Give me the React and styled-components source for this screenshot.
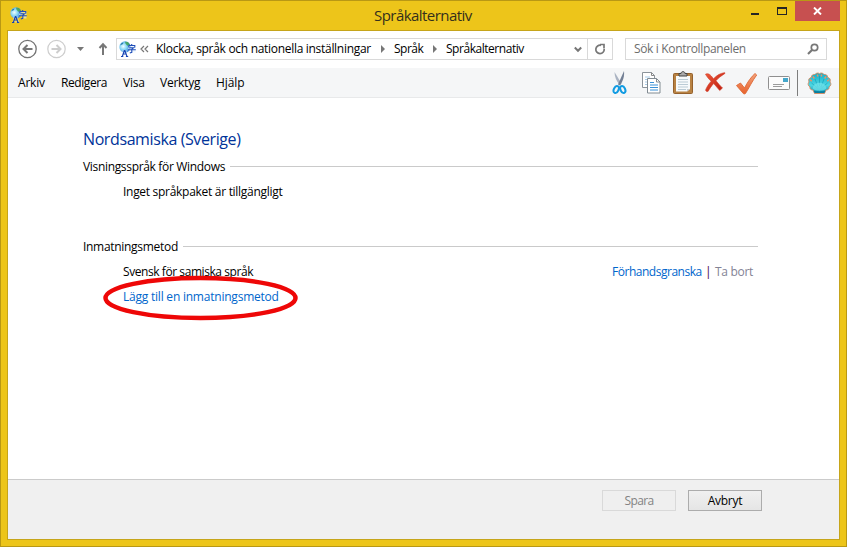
import React from "react";
import styled, { createGlobalStyle } from "styled-components";

const Global = createGlobalStyle`
  * { box-sizing: border-box; }
  body { margin: 0; overflow: hidden; }
  svg { display: block; flex: none; }
`;

const Frame = styled.div`
  width: 847px;
  height: 547px;
  padding: 0 6px 6px;
  border: 1px solid #b99814;
  background: #edc51a;
  display: flex;
  flex-direction: column;
  font: 12px/16px "Open Sans", "Noto Sans", sans-serif;
  color: #000;
`;

const Label = styled.span`
  display: block;
  flex: none;
  width: ${(p) => p.$w}px;
  letter-spacing: ${(p) => p.$ls || 0}px;
  white-space: pre;
  color: ${(p) => p.$color || "inherit"};
`;

const TitleBar = styled.header`
  flex: none;
  height: 29px;
  display: grid;
  grid-template-columns: 367px 1fr auto;
`;

const AppIcon = styled.div`
  padding: 6px 0 0 3px;
`;

const Title = styled.h1`
  margin: 0;
  padding-top: 3px;
  font-size: 15px;
  line-height: 22px;
  font-weight: 400;
  color: #342f1c;
`;

const Controls = styled.div`
  display: flex;
  align-items: flex-start;
`;

const CloseButton = styled.div`
  width: 45px;
  height: 20px;
  background: #c75050;
  display: flex;
  align-items: center;
  justify-content: center;
`;

const Client = styled.main`
  flex: 1;
  border: 1px solid #c6a51a;
  background: #fff;
  display: flex;
  flex-direction: column;
`;

const NavBar = styled.div`
  flex: none;
  height: 37px;
  padding: 7px 12px 0 10px;
  display: flex;
`;

const NavButtons = styled.div`
  width: 98px;
  height: 22px;
`;

const Field = styled.div`
  height: 22px;
  width: ${(p) => p.$w}px;
  margin-right: ${(p) => p.$gap || 0}px;
  border: 1px solid #d9d9d9;
  display: flex;
  align-items: center;
`;

const Arrow = styled.div`
  width: ${(p) => p.$w}px;
  padding-left: ${(p) => p.$pad}px;
`;

const Refresh = styled.div`
  width: 25px;
  height: 20px;
  border-left: 1px solid #d9d9d9;
  display: flex;
  align-items: center;
  justify-content: center;
`;

const MenuBar = styled.div`
  flex: none;
  height: 30px;
  background: #f5f6f7;
  border-bottom: 1px solid #e8e9ea;
  display: flex;
  justify-content: space-between;
  padding: 0 5px 0 10px;
`;

const Menus = styled.nav`
  display: flex;
  gap: 16px;
  padding-top: 7px;
`;

const Content = styled.section`
  flex: 1;
  padding: 31px 81px 0 75px;
`;

const Heading = styled.h2`
  margin: 0 0 9px;
  font-size: 16px;
  line-height: 20px;
  font-weight: 400;
  color: #003399;
`;

const Group = styled.div`
  height: 80px;
`;

const GroupTitle = styled.div`
  display: flex;
  align-items: center;
  height: 18px;
  gap: 5px;
  &::after {
    content: "";
    flex: 1;
    height: 1px;
    margin-bottom: 1px;
    background: #cacaca;
  }
`;

const Row = styled.div`
  display: flex;
  height: 25px;
  padding: 8px 5px 0 40px;
`;

const Actions = styled.div`
  margin-left: auto;
  display: flex;
`;

const Circled = styled.div`
  position: relative;
`;

const Ring = styled.svg`
  position: absolute;
  left: -21px;
  top: -14px;
`;

const Footer = styled.footer`
  flex: none;
  height: 60px;
  background: #f0f0f0;
  border-top: 1px solid #cbcbcb;
  display: flex;
  justify-content: flex-end;
  gap: 12px;
  padding: 10px 77px 0 0;
`;

const Button = styled.button`
  width: 74px;
  height: 21px;
  padding: 0;
  display: flex;
  justify-content: center;
  align-items: center;
  font: inherit;
  color: ${(p) => (p.disabled ? "#838383" : "#000")};
  border: 1px solid ${(p) => (p.disabled ? "#d9d9d9" : "#acacac")};
  background: ${(p) => (p.disabled ? "#efefef" : "linear-gradient(#f0f0f0, #e5e5e5)")};
`;

function GlobeIcon() {
  return (
    <svg width="17" height="17" viewBox="0 0 17 17">
      <defs>
        <radialGradient id="globe" cx=".35" cy=".45" r=".75">
          <stop offset="0" stopColor="#f0feff" />
          <stop offset=".4" stopColor="#86d5f6" />
          <stop offset="1" stopColor="#1b62c4" />
        </radialGradient>
      </defs>
      <circle cx="6" cy="6" r="5.700" fill="url(#globe)" />
      <path d="M6 .8 9 1l1.500 2.300-.5 1.700-2-.5-1.500-2z" fill="#3fa453" opacity=".85" />
      <path d="M1 4.500 2.500 2 4.500 1.500 4 3z" fill="#2e7fae" />
      <path d="M3.500 9h4l2 6.500h-7z" fill="#fff" opacity=".35" />
      <path d="M9 4h7.500v7.500H12V9H9z" fill="#e4f3ff" opacity=".55" />
      <path d="M12.700 3v1.500M9.800 6.500V4.500h6v2M10.500 6.700h4L12.800 8M9 8.700h7.800M12.800 8v3.300l-2 .7" fill="none" stroke="#204db8" strokeWidth="1.100" />
      <path d="M3.300 15.500 5.300 9.500h.6l2.100 6M4 13h3.500M2 15.500h2.300M6.900 15.500h2.300" fill="none" stroke="#1744b4" strokeWidth="1.150" />
    </svg>
  );
}

function NavIcons() {
  return (
    <svg width="98" height="22" fill="none">
      <circle cx="9.500" cy="11" r="8.700" stroke="#737373" strokeWidth="1.300" />
      <path d="M14.500 11H6M9.500 7 5.500 11l4 4" stroke="#777" strokeWidth="2" />
      <circle cx="38.500" cy="11" r="8.700" stroke="#cdcdcd" strokeWidth="1.200" />
      <path d="M33.500 11H42M38.500 7l4 4-4 4" stroke="#cdcdcd" strokeWidth="2" />
      <path d="M59 9h7l-3.500 4z" fill="#777" />
      <path d="M85 17V6.500M81.500 10 85 6.200l3.500 3.800" stroke="#777" strokeWidth="2" />
    </svg>
  );
}

function WindowIcons() {
  return (
    <svg width="44" height="20">
      <rect x="0" y="12" width="8" height="2" fill="#252525" />
      <path d="M26 6h10v8H26zM27 8v5h8V8z" fill="#252525" fillRule="evenodd" />
    </svg>
  );
}

function ToolIcons() {
  return (
    <svg width="222" height="29" viewBox="0 0 222 29" fill="none">
      <defs>
        <linearGradient id="shell" x1="0" y1="0" x2="0" y2="1">
          <stop offset="0" stopColor="#14aec8" />
          <stop offset=".6" stopColor="#4ed6e2" />
          <stop offset="1" stopColor="#0a8cae" />
        </linearGradient>
        <linearGradient id="tick" x1="0" y1="0" x2="0" y2="1">
          <stop offset="0" stopColor="#f2a27c" />
          <stop offset="1" stopColor="#e8622c" />
        </linearGradient>
        <linearGradient id="cross" x1="0" y1="0" x2="1" y2="1">
          <stop offset="0" stopColor="#ee5b3d" />
          <stop offset="1" stopColor="#ba1608" />
        </linearGradient>
      </defs>
      <path d="M2.500 4c0 5 2 9 5.200 13l1.800-1.500z" fill="#aab3c2" />
      <path d="m12 3-6 13.500 2 1C11.500 12 12.500 8 12 3z" fill="#727f94" />
      <ellipse cx="4.200" cy="21.500" rx="2.300" ry="3.700" transform="rotate(25 4.200 21.500)" stroke="#119be2" strokeWidth="2" />
      <ellipse cx="10.800" cy="21.500" rx="2.300" ry="3.700" transform="rotate(-25 10.800 21.500)" stroke="#119be2" strokeWidth="2" />
      <path d="M30.500 4.500h9l3 3v12h-12z" fill="#fff" stroke="#8c949b" />
      <path d="M33 9h5M33 11.500h4M33 14h3M33 16.500h3" stroke="#a8cbe7" />
      <path d="M39.500 4.500v3h3" stroke="#888" />
      <path d="M35.500 10.500h9l3.500 3.500v11H35.500z" fill="#fff" stroke="#828b92" />
      <path d="M44.500 10.500V14H48" stroke="#828b92" />
      <path d="M38 14.500h4M38 17h8M38 19.500h8M38 22h8" stroke="#3990d7" />
      <rect x="61.500" y="5.500" width="19" height="20" rx="1" fill="#b88243" stroke="#95612c" />
      <path d="M64 8h14v13l-3 2.500H64z" fill="#f7fafb" />
      <path d="M66 11.500h10M66 14h10M66 16.500h10M66 19h10M66 21.500h8" stroke="#bacbd5" />
      <path d="M75 23.500V21h3z" fill="#c8d0d4" />
      <path d="M67 8V5.500h2C69 3 73 3 73 5.500h2V8z" fill="#aaa" stroke="#444" />
      <path d="M93.500 6.200c3-1.200 4.500 0 8 4.500 4-3.800 6.500-5.300 11-6 1 0 .6.700-.2 1.200-3 2-6 4-8.300 6.800 2.300 3 4.500 5.200 6.500 7.300l-2.800 2.500-6-7c-2.500 2.700-4 5.200-5.500 7.700-1 .8-3-.1-2.500-1.500 1-2.600 3-5.800 5.500-8.500C96.500 11 95 8.700 93.500 6.200z" fill="url(#cross)" stroke="#cf3a27" strokeWidth=".6" />
      <path d="M124.500 17.500l4-2.500 4 5C135.500 14 139.500 8.500 143 5.500l1.700 1.500C140.500 12.500 137 20 133.500 25.500c-1 .7-2 .5-2.600-.5z" fill="url(#tick)" stroke="#de6936" strokeWidth=".9" />
      <rect x="156.500" y="8.500" width="21" height="13" rx="1" fill="#fcfcfc" stroke="#8f8f8f" />
      <rect x="171" y="10" width="5" height="4" fill="#45a7cb" />
      <path d="M161 16.500h11M161 18.500h9" stroke="#9c9c9c" />
      <path d="M185.500 2v26" stroke="#7d7d7d" />
      <path d="M202.500 25.500 201 22c-2.500 0-3.500-1.500-3-3-2-1.200-2.500-3.300-1-5-1-2.300.2-4.300 2.300-4.500 0-2.300 1.800-3.500 3.700-3 .8-1.500 3.200-2 4.500-.8 1.300-1.200 3.700-.7 4.500.8 1.900-.5 3.700.7 3.700 3 2.100.2 3.300 2.200 2.300 4.500 1.500 1.700 1 3.800-1 5 .5 1.500-.5 3-3 3l-1.500 3.500z" fill="url(#shell)" stroke="#d98a61" strokeWidth=".9" />
      <path d="m205.500 20-6-5M206 19l-3-8M207.500 18V8M209 19l3-8M209.500 20l6-5" stroke="#0790ae" strokeWidth=".9" opacity=".55" />
      <path d="m198 11.500 1.700 1.700M201 8.500l1.300 2M205.300 6.500l.5 2M209.700 6.500l-.5 2M214 8.500l-1.300 2M217 11.500l-1.700 1.700" stroke="#ef8f62" strokeWidth="1.500" />
      <path d="M200.500 20c2-7 12-7 14 0-1 3.500-13 3.500-14 0z" fill="#6fe2ea" opacity=".75" />
      <path d="M201.500 22.500c3 1.200 9 1.200 12 0l-1.300 2.500h-9.400z" fill="#087d9e" />
    </svg>
  );
}

const menus = [
  ["Arkiv", 27, -0.2],
  ["Redigera", 46, -0.42],
  ["Visa", 21, -0.25],
  ["Verktyg", 40, -0.25],
  ["Hjälp", 28, -0.1],
];

function Chevron() {
  return (
    <Arrow $w={23} $pad={10}>
      <svg width="5" height="8"><path d="M0 0l4 4-4 4z" fill="#777" /></svg>
    </Arrow>
  );
}

export default function App() {
  return (
    <>
      <Global />
      <Frame>
        <TitleBar>
          <AppIcon><GlobeIcon /></AppIcon>
          <Title><Label $w={98} $ls={-0.55}>Språkalternativ</Label></Title>
          <Controls>
            <WindowIcons />
            <CloseButton>
              <svg width="9" height="8"><path d="M1 .5 8 7.500M8 .5 1 7.500" stroke="#fff" strokeWidth="1.900" /></svg>
            </CloseButton>
          </Controls>
        </TitleBar>
        <Client>
          <NavBar>
            <NavButtons><NavIcons /></NavButtons>
            <Field $w={497} $gap={12}>
              <Arrow $w={23} $pad={2}><GlobeIcon /></Arrow>
              <Arrow $w={16} $pad={0}>
                <svg width="9" height="8"><path d="M4 1 1 4l3 3M8 1 5 4l3 3" fill="none" stroke="#777" strokeWidth="1.200" /></svg>
              </Arrow>
              <Label $w={215} $ls={-0.3}>Klocka, språk och nationella inställningar</Label>
              <Chevron />
              <Label $w={29} $ls={-0.5}>Språk</Label>
              <Chevron />
              <Label $w={128} $ls={-0.46}>Språkalternativ</Label>
              <Arrow $w={13} $pad={0}>
                <svg width="8" height="7"><path d="M.8 1.500 4 4.800 7.200 1.500" fill="none" stroke="#777" strokeWidth="2" /></svg>
              </Arrow>
              <Refresh>
                <svg width="12" height="12"><path d="M7 2.300A4.200 4.200 0 1 0 10.200 6M6 1.500h4v4" fill="none" stroke="#777" strokeWidth="1.700" /></svg>
              </Refresh>
            </Field>
            <Field $w={202}>
              <Arrow $w={8} $pad={0} />
              <Label $w={173} $ls={-0.34} $color="#6d6d6d">Sök i Kontrollpanelen</Label>
              <svg width="12" height="12"><circle cx="7.500" cy="4.500" r="3.200" fill="none" stroke="#777" strokeWidth="1.700" /><path d="M5 7 1 11" stroke="#777" strokeWidth="2.200" /></svg>
            </Field>
          </NavBar>
          <MenuBar>
            <Menus>
              {menus.map(([name, w, ls]) => <Label key={name} $w={w} $ls={ls}>{name}</Label>)}
            </Menus>
            <ToolIcons />
          </MenuBar>
          <Content>
            <Heading><Label $w={158} $ls={-0.4}>Nordsamiska (Sverige)</Label></Heading>
            <Group>
              <GroupTitle><Label $w={142} $ls={-0.33}>Visningsspråk för Windows</Label></GroupTitle>
              <Row><Label $w={160} $ls={-0.29}>Inget språkpaket är tillgängligt</Label></Row>
            </Group>
            <Group>
              <GroupTitle><Label $w={95} $ls={-0.3}>Inmatningsmetod</Label></GroupTitle>
              <Row>
                <Label $w={130} $ls={-0.43}>Svensk för samiska språk</Label>
                <Actions>
                  <Label $w={93} $ls={-0.48} $color="#0066cc">Förhandsgranska</Label>
                  <Label $w={10} $color="#400040">|</Label>
                  <Label $w={38} $ls={-0.3} $color="#838395">Ta bort</Label>
                </Actions>
              </Row>
              <Row>
                <Circled>
                  <Label $w={156} $ls={-0.22} $color="#0066cc">Lägg till en inmatningsmetod</Label>
                  <Ring width="198" height="46"><ellipse cx="98.500" cy="23" rx="95" ry="20" fill="none" stroke="#ee0707" strokeWidth="4.500" /></Ring>
                </Circled>
              </Row>
            </Group>
          </Content>
          <Footer>
            <Button disabled><Label $w={29} $ls={-0.65}>Spara</Label></Button>
            <Button><Label $w={35} $ls={-0.25}>Avbryt</Label></Button>
          </Footer>
        </Client>
      </Frame>
    </>
  );
}
